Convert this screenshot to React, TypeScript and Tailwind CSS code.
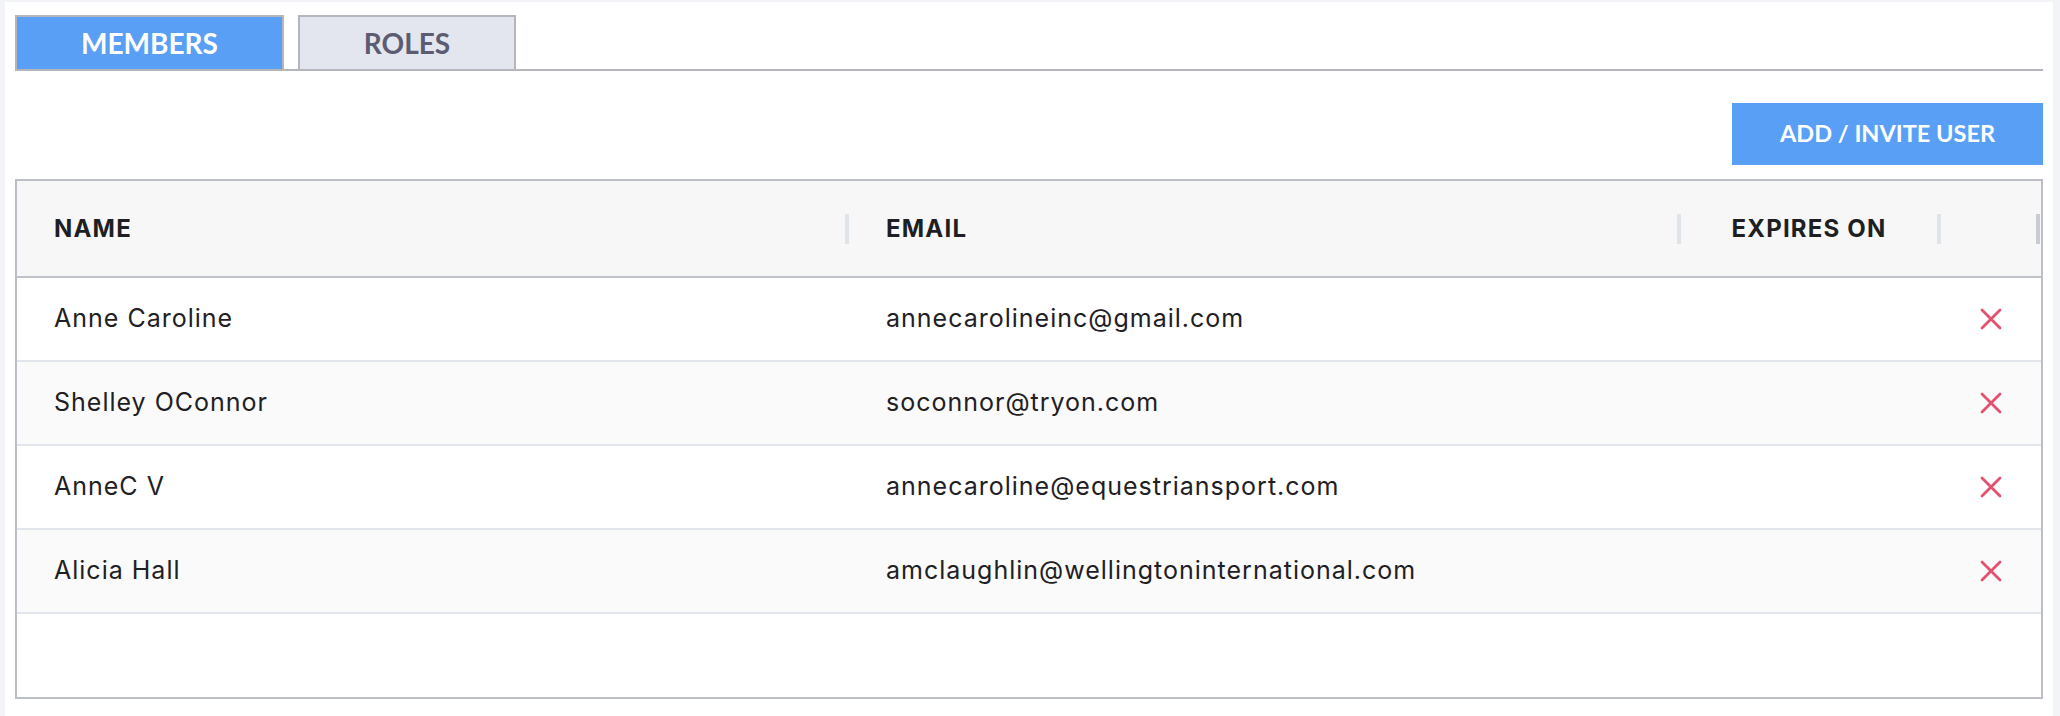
import React from "react";

const rows = [
  { name: "Anne Caroline", email: "annecarolineinc@gmail.com" },
  { name: "Shelley OConnor", email: "soconnor@tryon.com" },
  { name: "AnneC V", email: "annecaroline@equestriansport.com" },
  { name: "Alicia Hall", email: "amclaughlin@wellingtoninternational.com" },
];

function XIcon() {
  return (
    <svg width="22" height="22" viewBox="0 0 22 22" fill="none">
      <path d="M2 2L20 20M20 2L2 20" stroke="#e5506e" strokeWidth="2.8" strokeLinecap="round" />
    </svg>
  );
}

export default function App() {
  return (
    <div className="w-[2060px] h-[716px] bg-[#f3f4f8] pt-[2px] pl-[5px] pr-[7px] overflow-hidden">
      <div className="bg-white h-[714px] px-[10px] pt-[13px]">
        {/* Tabs */}
        <div className="flex items-end gap-[14px] border-b-2 border-[#b5b6bc] font-['Lato',sans-serif]">
          <div className="-mb-[2px] h-[56px] w-[269px] border-2 border-[#b5b6bc] bg-[#5a9ff6] flex items-center justify-center text-white text-[28px] font-bold">
            MEMBERS
          </div>
          <div className="-mb-[2px] h-[56px] w-[218px] border-2 border-[#b5b6bc] bg-[#e3e6ee] flex items-center justify-center text-[#5b5c72] text-[28px] font-bold">
            ROLES
          </div>
        </div>

        {/* Button */}
        <div className="flex justify-end mt-[32px]">
          <button className="w-[311px] h-[62px] bg-[#5a9ff6] text-white text-[23.5px] font-bold font-['Lato',sans-serif] flex items-center justify-center">
            ADD / INVITE USER
          </button>
        </div>

        {/* Table */}
        <div className="mt-[14px] border-2 border-[#bcbfc5] font-['Inter',sans-serif] flex flex-col h-[520px]">
          <div className="flex items-center h-[97px] bg-[#f7f7f8] border-b-2 border-[#bfc2c8] text-[#1e1f23] text-[24px] font-bold tracking-[1.2px]">
            <div className="w-[828px] pl-[37px]">NAME</div>
            <div className="w-[4px] h-[30px] bg-[#dfe3ea]" />
            <div className="w-[828px] pl-[37px]">EMAIL</div>
            <div className="w-[4px] h-[30px] bg-[#dfe3ea]" />
            <div className="w-[256px] text-center">EXPIRES ON</div>
            <div className="w-[4px] h-[30px] bg-[#dfe3ea]" />
            <div className="w-[95px]" />
            <div className="w-[4px] h-[30px] bg-[#c9ccd3]" />
          </div>
          {rows.map((r, i) => (
            <div
              key={r.email}
              className={`flex items-center h-[84px] border-b-2 border-[#e2e5ec] text-[25px] tracking-[1px] text-[#1f2024] ${
                i % 2 === 1 ? "bg-[#fafafa]" : "bg-white"
              }`}
            >
              <div className="w-[832px] pl-[37px]">{r.name}</div>
              <div className="w-[832px] pl-[37px]">{r.email}</div>
              <div className="w-[260px]" />
              <div className="flex-1 flex items-center justify-center">
                <XIcon />
              </div>
            </div>
          ))}
          <div className="flex-1 bg-white" />
        </div>
      </div>
    </div>
  );
}
